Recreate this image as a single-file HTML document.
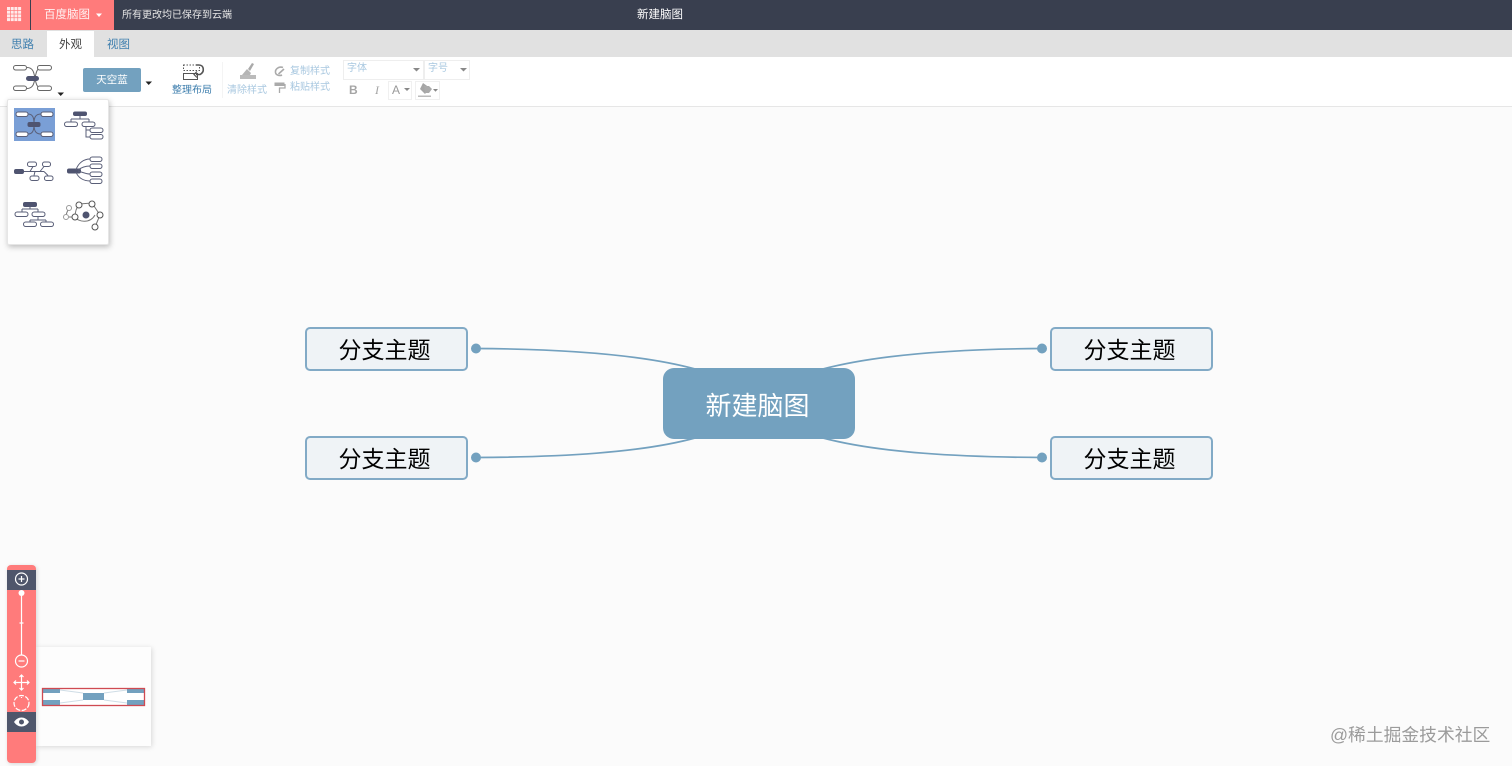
<!DOCTYPE html>
<html lang="zh"><head><meta charset="utf-8"><title>新建脑图</title>
<style>
html,body{margin:0;padding:0;width:1512px;height:766px;overflow:hidden;background:#fbfbfb;font-family:"Liberation Sans","Noto Sans CJK SC",sans-serif}
div,span{position:absolute;box-sizing:border-box;white-space:nowrap}
svg{position:absolute;overflow:visible}
.t{font-size:11px;line-height:14px}
.b{width:163px;height:44px;background:#eff3f6;border:2px solid #82aac6;border-radius:5px;color:#000;font-size:23px;line-height:43px;text-align:center;padding-right:4px}
.sel{height:20px;top:60px;border:1px solid #eee;background:#fff;color:#a9c8e0;font-size:10px;line-height:16px;padding-left:3px}
</style></head><body>
<div style="left:0;top:0;width:1512px;height:30px;background:#393f4f"></div>
<div style="left:0;top:0;width:30px;height:30px;background:#ff7b7b"></div>
<svg style="left:0;top:0" width="30" height="30"><g fill="#fff" opacity=".85"><rect x="7" y="7" width="3" height="3"/><rect x="10.700" y="7" width="3" height="3"/><rect x="14.400" y="7" width="3" height="3"/><rect x="18.100" y="7" width="3" height="3"/><rect x="7" y="10.700" width="3" height="3"/><rect x="10.700" y="10.700" width="3" height="3"/><rect x="14.400" y="10.700" width="3" height="3"/><rect x="18.100" y="10.700" width="3" height="3"/><rect x="7" y="14.400" width="3" height="3"/><rect x="10.700" y="14.400" width="3" height="3"/><rect x="14.400" y="14.400" width="3" height="3"/><rect x="18.100" y="14.400" width="3" height="3"/><rect x="7" y="18.100" width="3" height="3"/><rect x="10.700" y="18.100" width="3" height="3"/><rect x="14.400" y="18.100" width="3" height="3"/><rect x="18.100" y="18.100" width="3" height="3"/></g></svg>
<div style="left:31px;top:0;width:83px;height:30px;background:#ff7b7b"></div>
<div style="left:44px;top:8px;color:#fff;font-size:11.500px;line-height:15px;opacity:.9">百度脑图</div>
<svg style="left:95px;top:13px" width="8" height="5"><path d="M1 0.500h6L4 4z" fill="#fff"/></svg>
<div style="left:122px;top:9px;color:#e6e6e6;font-size:10px;line-height:14px">所有更改均已保存到云端</div>
<div style="left:637px;top:8px;color:#fff;font-size:11.500px;line-height:15px">新建脑图</div>

<div style="left:0;top:30px;width:1512px;height:27px;background:#e1e1e1"></div>
<div style="left:47px;top:31px;width:47px;height:26px;background:#fff"></div>
<div class="t" style="left:11px;top:38px;color:#3f7fae;font-size:11.500px">思路</div>
<div class="t" style="left:59px;top:38px;color:#444;font-size:11.500px">外观</div>
<div class="t" style="left:107px;top:38px;color:#3f7fae;font-size:11.500px">视图</div>

<div style="left:0;top:57px;width:1512px;height:50px;background:#fff;border-bottom:1px solid #e6e6e6"></div>

<svg style="left:12px;top:63px" width="42" height="30" fill="none" stroke="#666" stroke-width="1">
<path d="M15 4.500c6 0 7 5 8 11 1-6 2-11 7-11M15 25.500c6 0 7-5 8-10 1 5 2 10 7 10"/>
<rect x="1.500" y="2.500" width="13" height="4.500" rx="2.200" fill="#fff"/><rect x="25.500" y="2.500" width="14" height="4.500" rx="2.200" fill="#fff"/><rect x="1.500" y="23" width="13" height="4.500" rx="2.200" fill="#fff"/><rect x="25.500" y="23" width="14" height="4.500" rx="2.200" fill="#fff"/>
<rect x="14" y="13" width="13" height="5" rx="2.500" fill="#4f5470" stroke="none"/></svg>
<svg style="left:57px;top:92px" width="8" height="5"><path d="M0.500 0.500h6.500L3.700 4z" fill="#222"/></svg>

<div style="left:83px;top:68px;width:58px;height:24px;background:#73a1bf;border-radius:2px;color:#fff;font-size:10.500px;line-height:25px;text-align:center">天空蓝</div>
<svg style="left:145px;top:81px" width="8" height="5"><path d="M0.500 0.500h6.500L3.700 4z" fill="#222"/></svg>

<svg style="left:183px;top:63px" width="22" height="18" fill="none" stroke="#555" stroke-width="1"><rect x="0.500" y="2" width="16" height="5.500" stroke-dasharray="1.500 1.500"/><rect x="0.500" y="10.500" width="14" height="6"/><path d="M13 2h3c5 0 6 7 1 9.500h-4" stroke-width="1.600"/><path d="M14 8.500l-3 3 3 3" stroke-width="1.200"/></svg>
<div style="left:172px;top:84px;color:#3f7fae;font-size:10px;line-height:14px">整理布局</div>
<div style="left:222px;top:62px;width:1px;height:36px;background:#f4f4f4"></div>

<svg style="left:240px;top:63px" width="18" height="17"><path d="M12 0L8 6l2 2 4-7z" fill="#aaa"/><path d="M7 6l4 4-1 2H2z" fill="#b5b5b5"/><rect x="0" y="12" width="16" height="4" fill="#bbb"/></svg>
<div style="left:227px;top:84px;color:#a9c8e0;font-size:10px;line-height:14px">清除样式</div>
<svg style="left:274px;top:66px" width="12" height="11" fill="none" stroke="#aaa" stroke-width="1.600"><path d="M9 1.500C5 0 1 3 1.500 6.500 2 9.500 6 10 8 9M10 3L4.500 8"/></svg>
<div style="left:290px;top:65px;color:#a9c8e0;font-size:10px;line-height:14px">复制样式</div>
<svg style="left:274px;top:82px" width="12" height="12"><rect x="0.500" y="0.500" width="10" height="3.500" fill="#aaa"/><path d="M11 2v4H5.500v5" fill="none" stroke="#aaa" stroke-width="1.300"/></svg>
<div style="left:290px;top:81px;color:#a9c8e0;font-size:10px;line-height:14px">粘贴样式</div>

<div class="sel" style="left:343px;width:81px">字体</div>
<svg style="left:413px;top:68px" width="7" height="4"><path d="M0 0h7L3.500 3.500z" fill="#888"/></svg>
<div class="sel" style="left:424px;width:46px">字号</div>
<svg style="left:460px;top:68px" width="7" height="4"><path d="M0 0h7L3.500 3.500z" fill="#888"/></svg>
<div style="left:349px;top:83px;color:#a5a5a5;font-size:12px;font-weight:bold;line-height:14px">B</div>
<div style="left:375px;top:83px;color:#a5a5a5;font-size:12px;font-style:italic;font-family:'Liberation Serif',serif;line-height:14px">I</div>
<div style="left:388px;top:81px;width:24px;height:19px;border:1px solid #f0f0f0;color:#999;font-size:12px;line-height:17px;padding-left:3px">A</div>
<svg style="left:404px;top:88px" width="6" height="4"><path d="M0 0h6L3 3z" fill="#888"/></svg>
<div style="left:415px;top:81px;width:25px;height:19px;border:1px solid #f0f0f0"></div>
<svg style="left:418px;top:83px" width="20" height="15"><path d="M5 0l7 5-5 6-5-5z" fill="#a5a5a5"/><path d="M6 3h5l3 3-3 4H7z" fill="#aaa"/><path d="M15 6h5l-2.500 2.700z" fill="#888"/><rect x="0" y="12.500" width="13" height="1.500" fill="#bbb"/></svg>

<div style="left:7px;top:99px;width:102px;height:146px;background:#fff;border:1px solid #e6e6e6;border-radius:2px;box-shadow:1px 2px 6px rgba(0,0,0,.25)"></div>
<div style="left:14px;top:108px;width:41px;height:33px;background:#7a9fd6"></div>
<svg style="left:0;top:95px" width="120" height="155" fill="none" stroke="#5a5f78" stroke-width="1">
<path d="M28 19c5 0 6 4 6 10 0-6 1-10 7-10M28 39c5 0 6-4 6-10 0 6 1 10 7 10"/>
<g fill="#fff"><rect x="16" y="17" width="12" height="4.500" rx="2.200"/><rect x="41" y="17" width="12" height="4.500" rx="2.200"/><rect x="16" y="37" width="12" height="4.500" rx="2.200"/><rect x="41" y="37" width="12" height="4.500" rx="2.200"/></g>
<rect x="27.500" y="27" width="13" height="5" rx="2" fill="#4f5470" stroke="none"/>
<rect x="73" y="16.500" width="14" height="4.500" rx="2" fill="#4f5470" stroke="none"/>
<path d="M80 21v3M71 24h18M71 24v3M89 24v3M86 31v11h4M86 35h4"/>
<g fill="#fff"><rect x="64.500" y="27" width="13" height="4.500" rx="2.200"/><rect x="82" y="27" width="13" height="4.500" rx="2.200"/><rect x="90" y="33" width="13" height="4.500" rx="2.200"/><rect x="90" y="39.500" width="13" height="4.500" rx="2.200"/></g>
<rect x="14" y="74" width="10" height="5" rx="2" fill="#4f5470" stroke="none"/>
<path d="M24 76.500h20M30 76.500l3-5M40 76.500l4-5M35 76.500l-1 4M44 76.500l4 4"/>
<g fill="#fff"><rect x="27.500" y="67" width="9" height="4.500" rx="2"/><rect x="42.500" y="67" width="8" height="4.500" rx="2"/><rect x="30" y="81" width="9" height="4.500" rx="2"/><rect x="44.500" y="81" width="8.500" height="4.500" rx="2"/></g>
<rect x="67" y="73.500" width="14" height="5" rx="2" fill="#4f5470" stroke="none"/>
<path d="M76 75c2-7 8-11 14-11M78 75c4-3 8-4 12-4M78 76c4 1 8 3 12 3M76 77c2 6 8 9 14 9"/>
<g fill="#fff"><rect x="90" y="62" width="12" height="4.500" rx="2.200"/><rect x="90" y="69" width="12" height="4.500" rx="2.200"/><rect x="90" y="77" width="12" height="4.500" rx="2.200"/><rect x="90" y="84" width="12" height="4.500" rx="2.200"/></g>
<rect x="23" y="107" width="14" height="5" rx="2" fill="#4f5470" stroke="none"/>
<path d="M30 112v2M22 114h16M22 114v3M38 114v3M38 121v4M30 125h16M30 125v2M46 125v2"/>
<g fill="#fff"><rect x="15" y="117" width="13" height="4.500" rx="2.200"/><rect x="32" y="117" width="13" height="4.500" rx="2.200"/><rect x="23.500" y="127" width="13" height="4.500" rx="2.200"/><rect x="40.500" y="127" width="13" height="4.500" rx="2.200"/></g>
<path d="M66 122c0-4 2-7 3-9M69 122h6M75 122c0-5 2-10 4-13l13-1 8 12-5 12M75 122c3 5 15 7 20-2" stroke="#777"/>
<g fill="#fff" stroke="#555"><circle cx="79" cy="110" r="3"/><circle cx="92" cy="109" r="3"/><circle cx="100" cy="120" r="3"/><circle cx="95" cy="132" r="3"/><circle cx="75" cy="122" r="3"/><circle cx="66" cy="122" r="2.500" stroke="#999"/><circle cx="69" cy="113" r="2.500" stroke="#999"/></g>
<circle cx="86" cy="120" r="3.500" fill="#4f5470" stroke="none"/>
</svg>

<svg style="left:0;top:0" width="1512" height="766" fill="none" stroke="#73a1bf" stroke-width="1.700">
<path d="M476 348.500C560 349 640 354 695 369"/>
<path d="M476 457.500C560 457 640 453 695 438"/>
<path d="M1042 348.500C960 349 880 354 823 369"/>
<path d="M1042 457.500C960 457 880 453 823 438"/>
<g fill="#73a1bf" stroke="none"><circle cx="476" cy="348.500" r="5"/><circle cx="476" cy="457.500" r="5"/><circle cx="1042" cy="348.500" r="5"/><circle cx="1042" cy="457.500" r="5"/></g>
</svg>
<div class="b" style="left:305px;top:327px">分支主题</div>
<div class="b" style="left:305px;top:436px">分支主题</div>
<div class="b" style="left:1050px;top:327px">分支主题</div>
<div class="b" style="left:1050px;top:436px">分支主题</div>
<div style="left:663px;top:368px;width:192px;height:71px;background:#73a1bf;border-radius:11px;color:#fff;font-size:26px;line-height:76px;text-align:center;padding-right:3px">新建脑图</div>

<div style="left:36px;top:647px;width:115px;height:99px;background:#fdfdfd;box-shadow:1px 1px 5px rgba(0,0,0,.14)"></div>
<div style="left:42px;top:688px;width:103px;height:18px;background:#fff"></div>
<svg style="left:42px;top:688px" width="103" height="18"><rect width="18" height="5" fill="#73a1bf"/><rect x="85" width="18" height="5" fill="#73a1bf"/><rect y="12" width="18" height="6" fill="#73a1bf"/><rect x="85" y="12" width="18" height="6" fill="#73a1bf"/><rect x="41" y="5" width="21" height="7" fill="#73a1bf"/><path d="M18 2l23 3M18 15l23-3M85 2l-23 3M85 15l-23-3" stroke="#cfdde6" fill="none"/><rect x=".5" y=".5" width="102" height="17" fill="none" stroke="#cf4a52" stroke-width="1.300"/></svg>

<div style="left:7px;top:565px;width:29px;height:198px;background:#ff7b7b;border-radius:4px;box-shadow:1px 1px 4px rgba(0,0,0,.15)"></div>
<div style="left:7px;top:570px;width:29px;height:20px;background:#4f566b"></div>
<div style="left:7px;top:712px;width:29px;height:20px;background:#4f566b"></div>
<svg style="left:7px;top:565px" width="29" height="170" fill="none" stroke="#fff" stroke-width="1.200">
<circle cx="14.500" cy="14" r="6"/><path d="M11.500 14h6M14.500 11v6"/>
<path d="M14.500 28v62M12.500 58h4"/><circle cx="14.500" cy="28" r="3" fill="#fff" stroke="none"/>
<circle cx="14.500" cy="96" r="6"/><path d="M11.500 96h6"/>
<path d="M14.500 110v15M7 117.500h15M12.500 112l2-2 2 2M12.500 123l2 2 2-2M9 115.500l-2 2 2 2M20 115.500l2 2-2 2"/>
<circle cx="14.500" cy="138" r="7.500" stroke-dasharray="5 1.500"/><path d="M14.500 133v-1"/>
<path d="M7 157c4-6 11-6 15 0-4 6-11 6-15 0z" fill="#fff" stroke="none"/><circle cx="14.500" cy="157" r="2.500" fill="#4f566b" stroke="none"/>
</svg>

<div style="left:1330px;top:724px;color:#9b9b9b;font-size:17.800px;line-height:22px">@稀土掘金技术社区</div>
</body></html>
